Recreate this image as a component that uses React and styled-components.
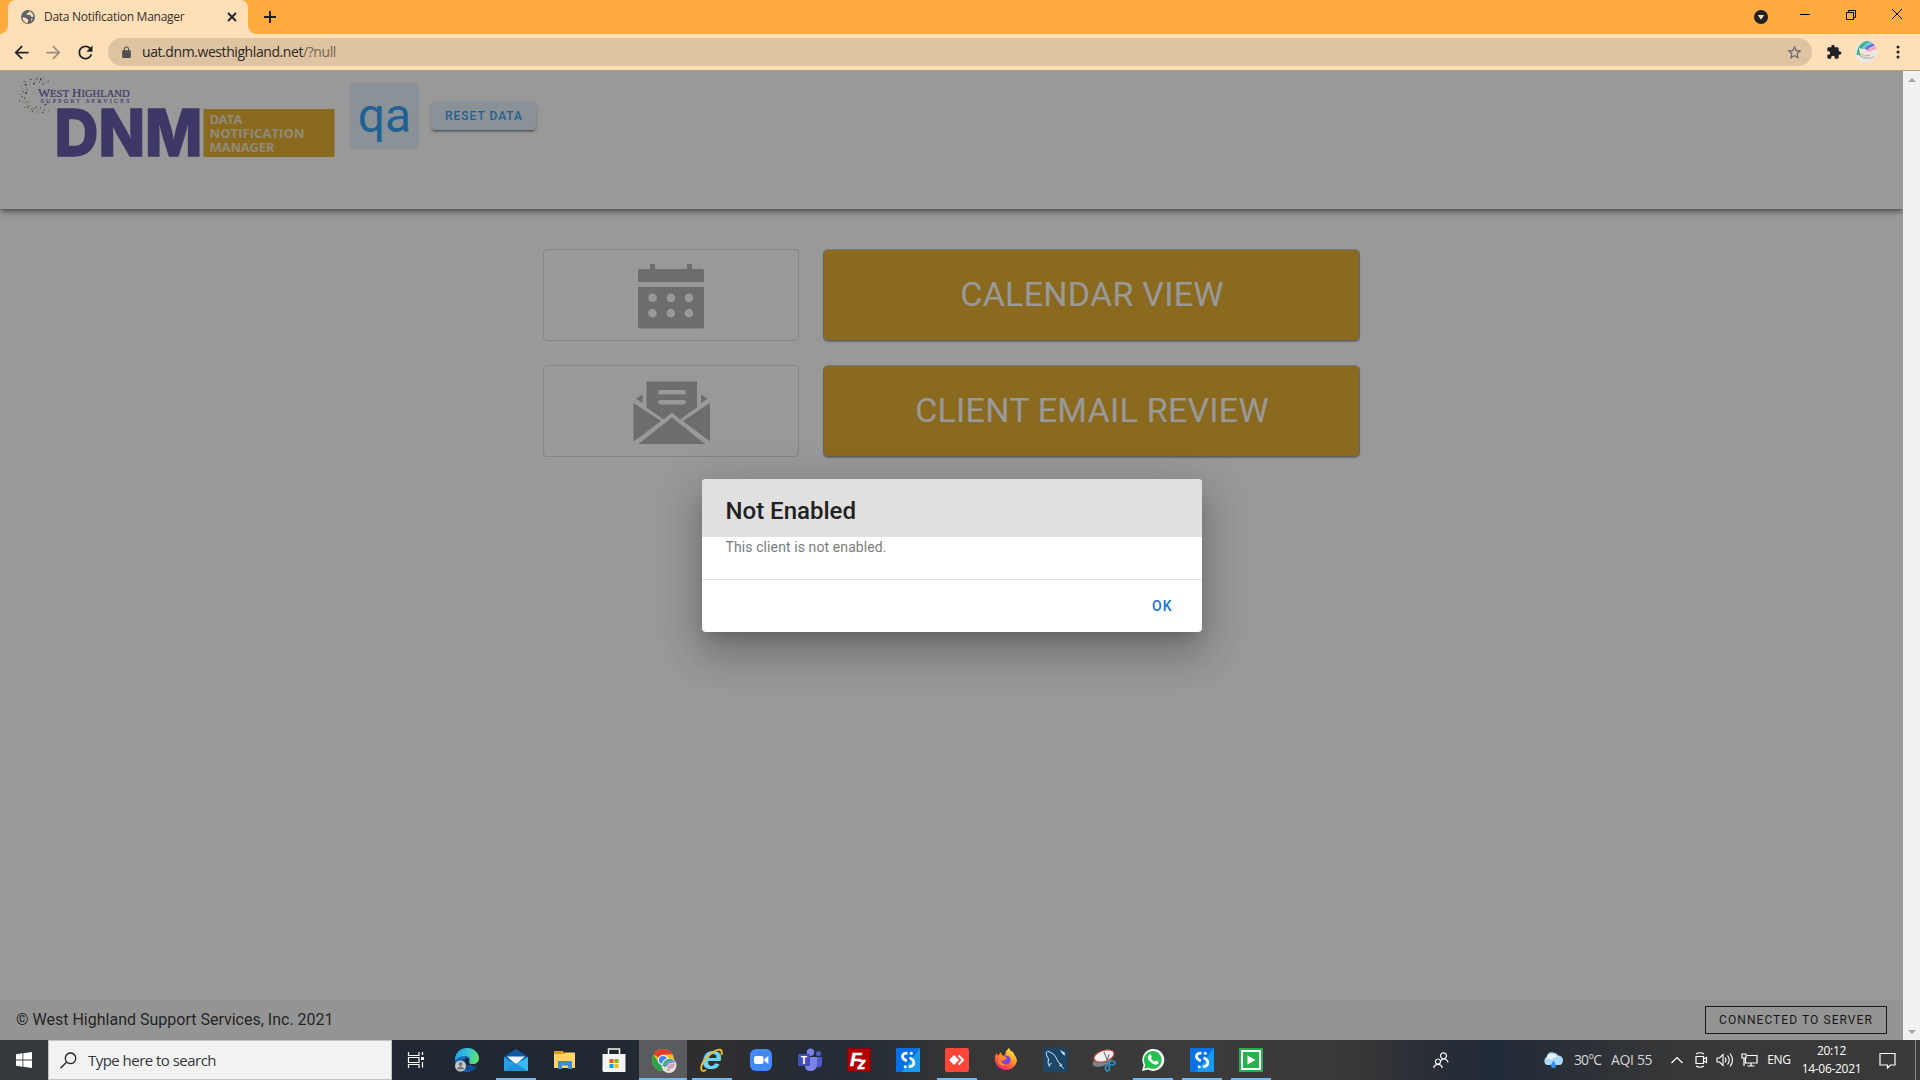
import React from "react";
import styled, { createGlobalStyle, css } from "styled-components";

const Global = createGlobalStyle`
  *, *::before, *::after { box-sizing: border-box; }
  html, body { margin: 0; padding: 0; overflow: hidden; }
  body { font-family: Roboto, "Liberation Sans", sans-serif; }
  svg { display: block; flex: none; overflow: visible; }
`;

const Screen = styled.div`
  width: 1920px;
  height: 1080px;
  display: flex;
  flex-direction: column;
  overflow: hidden;
`;

/* ---------- browser chrome ---------- */

const TabStrip = styled.div`
  height: 34px;
  flex: none;
  background: #ffab40;
  display: flex;
  align-items: stretch;
  padding-left: 8px;
`;

const Tab = styled.div`
  position: relative;
  width: 240px;
  background: #ffdfb8;
  border-radius: 8px 8px 0 0;
  display: flex;
  align-items: center;
  padding: 0 9px 0 12px;
  &::before,
  &::after {
    content: "";
    position: absolute;
    bottom: 0;
    width: 8px;
    height: 8px;
  }
  &::before {
    left: -8px;
    background: radial-gradient(circle at 0 0, #ffab40 7.5px, #ffdfb8 8px);
  }
  &::after {
    right: -8px;
    background: radial-gradient(circle at 100% 0, #ffab40 7.5px, #ffdfb8 8px);
  }
`;

const TabTitle = styled.span`
  flex: 1;
  margin-left: 8px;
  font: 12px/16px "Open Sans", "Noto Sans", sans-serif;
  letter-spacing: -0.27px;
  color: #33302c;
  white-space: nowrap;
`;

const IconCell = styled.div`
  width: ${(p) => p.$w || 32}px;
  flex: none;
  display: flex;
  align-items: center;
  justify-content: center;
`;

const Spacer = styled.div`
  flex: 1;
`;

const Toolbar = styled.div`
  height: 37px;
  flex: none;
  background: #ffdfb8;
  border-bottom: 1px solid #b59e82;
  display: flex;
  align-items: center;
  padding: 0 6px;
`;

const Omnibox = styled.div`
  flex: 1;
  height: 28px;
  margin: 0 6px;
  border-radius: 14px;
  background: #dfc4a1;
  display: flex;
  align-items: center;
  padding: 0 8px 0 10px;
`;

const Url = styled.span`
  flex: 1;
  margin-left: 8px;
  font: 14px/20px "Open Sans", "Noto Sans", sans-serif;
  letter-spacing: -0.42px;
  color: #2a2724;
  white-space: nowrap;
  span {
    color: #766655;
  }
`;

/* ---------- page ---------- */

const Viewport = styled.div`
  height: 969px;
  flex: none;
  display: flex;
`;

const Page = styled.div`
  position: relative;
  flex: 1;
  background: #fff;
  display: flex;
  flex-direction: column;
  overflow: hidden;
`;

const ScrollBar = styled.div`
  width: 17px;
  background: #f1f1f1;
  display: flex;
  flex-direction: column;
  justify-content: space-between;
  align-items: center;
  padding: 7px 0 6px;
`;

const ScrollArrow = styled.i`
  width: 0;
  height: 0;
  border: 4px solid transparent;
  ${(p) =>
    p.$down
      ? css`
          border-top-color: #a3a3a3;
          border-bottom: 0;
        `
      : css`
          border-bottom-color: #a3a3a3;
          border-top: 0;
        `}
`;

const Header = styled.header`
  height: 138px;
  flex: none;
  display: flex;
  align-items: flex-start;
  padding: 2px 16px 0;
  background: #fff;
  box-shadow: 0 2px 4px -1px rgba(0, 0, 0, 0.4), 0 4px 5px rgba(0, 0, 0, 0.2),
    0 1px 10px rgba(0, 0, 0, 0.16);
`;

const EnvBadge = styled.div`
  margin: 10px 0 0 14px;
  width: 69px;
  height: 66px;
  background: #e3f2fd;
  color: #2196f3;
  font-size: 48px;
  line-height: 66px;
  text-align: center;
`;

const ResetButton = styled.button`
  margin: 29px 0 0 12px;
  width: 105px;
  height: 28px;
  padding: 0 0 0 1px;
  border: 0;
  border-radius: 4px;
  background: #e3f2fd;
  color: #2196f3;
  font: 500 12px/28px Roboto, sans-serif;
  letter-spacing: 1px;
  box-shadow: 0 3px 1px -2px rgba(0, 0, 0, 0.3), 0 2px 2px rgba(0, 0, 0, 0.22),
    0 1px 5px rgba(0, 0, 0, 0.14);
`;

const Main = styled.main`
  flex: 1;
  display: grid;
  grid-template-columns: 256px 537px;
  grid-auto-rows: 92px;
  gap: 24px;
  justify-content: center;
  align-content: start;
  padding-top: 40px;
`;

const IconCard = styled.div`
  border: 1px solid rgba(0, 0, 0, 0.14);
  border-radius: 4px;
  display: flex;
  align-items: center;
  justify-content: center;
  padding: 3px 0 0;
`;

const MenuButton = styled.button`
  padding: 0 0 2px 1px;
  border: 1px solid rgba(110, 110, 110, 0.32);
  border-radius: 5px;
  background: #e3a81f;
  background-clip: padding-box;
  color: #fff;
  font: 400 34px/86px Roboto, sans-serif;
  letter-spacing: 0.25px;
  box-shadow: 0 1px 1px rgba(0, 0, 0, 0.2), 0 1px 2px rgba(0, 0, 0, 0.16);
`;

const Footer = styled.footer`
  height: 40px;
  flex: none;
  background: #f5f5f5;
  display: flex;
  align-items: center;
  justify-content: space-between;
  padding: 0 16px;
  font-size: 16px;
  line-height: 24px;
  color: rgba(0, 0, 0, 0.87);
`;

const StatusChip = styled.div`
  width: 182px;
  height: 28px;
  border: 1px solid #141414;
  color: #111;
  font-size: 12px;
  line-height: 26px;
  letter-spacing: 1.07px;
  text-align: center;
`;

const Overlay = styled.div`
  position: absolute;
  inset: 0;
  background: rgba(33, 33, 33, 0.46);
  display: flex;
  align-items: center;
  justify-content: center;
  padding-left: 1px;
`;

const Dialog = styled.div`
  width: 500px;
  height: 153px;
  border-radius: 4px;
  overflow: hidden;
  background: #fff;
  box-shadow: 0 11px 15px -7px rgba(0, 0, 0, 0.2),
    0 24px 38px 3px rgba(0, 0, 0, 0.14), 0 9px 46px 8px rgba(0, 0, 0, 0.12);
`;

const DialogTitle = styled.div`
  height: 58px;
  padding: 16px 0 0 23.5px;
  background: #e0e0e0;
  color: #212121;
  font-size: 24px;
  font-weight: 500;
  line-height: 32px;
`;

const DialogText = styled.div`
  height: 42px;
  padding-left: 23.5px;
  color: #7c7c7c;
  font-size: 14px;
  line-height: 21px;
  letter-spacing: 0.1px;
`;

const DialogActions = styled.div`
  height: 53px;
  border-top: 1px solid #e0e0e0;
  display: flex;
  justify-content: flex-end;
  align-items: center;
  padding-right: 29.5px;
  color: #1976d2;
  font-size: 14px;
  font-weight: 500;
  letter-spacing: 1px;
`;

/* ---------- taskbar ---------- */

const TaskBar = styled.div`
  height: 40px;
  flex: none;
  display: flex;
  align-items: stretch;
  background: linear-gradient(
    90deg,
    #35393b 0,
    #33383b 60px,
    #1f2733 392px,
    #202832 620px,
    #302f2f 710px,
    #242c35 800px,
    #252d36 860px,
    #363636 960px,
    #3b3b3b 1180px,
    #383838 1350px,
    #2b2f36 1420px,
    #202a38 1490px,
    #2b3037 1570px,
    #383838 1690px,
    #3a3a3a 1920px
  );
`;

const SearchBox = styled.div`
  width: 344px;
  height: 40px;
  background: #f2f2f2;
  border: 1px solid #c2c2c2;
  display: flex;
  align-items: center;
  padding-left: 11px;
  font: 15px/20px "Open Sans", "Noto Sans", sans-serif;
  letter-spacing: -0.53px;
  color: #33373b;
  span {
    margin-left: 11px;
  }
`;

const AppCell = styled.div`
  width: 48px;
  margin-right: ${(p) => (p.$first ? 3 : 1)}px;
  flex: none;
  display: flex;
  align-items: center;
  justify-content: center;
  background: ${(p) =>
    p.$state === "active"
      ? "linear-gradient(#76b9ed, #76b9ed) bottom / 48px 2px no-repeat, #5a5b5e"
      : p.$state === "open"
      ? "linear-gradient(#76b9ed, #76b9ed) bottom / 40px 2px no-repeat"
      : "none"};
`;

const TrayText = styled.div`
  width: ${(p) => p.$w}px;
  flex: none;
  align-self: center;
  text-align: center;
  white-space: nowrap;
  color: #fff;
  font: 12px/${(p) => p.$line || 16}px "Open Sans", "Noto Sans", sans-serif;
  letter-spacing: -0.3px;
`;

const Clock = styled(TrayText)`
  margin-left: 4px;
  padding-right: 1px;
`;

const Weather = styled.div`
  width: 123px;
  flex: none;
  margin-left: 77px;
  display: flex;
  align-items: center;
  white-space: nowrap;
  color: #d6d6d6;
  font: 14px/20px "Open Sans", "Noto Sans", sans-serif;
  letter-spacing: -0.9px;
`;

const Temperature = styled.span`
  width: 37px;
  margin-left: 10px;
`;

const AirQuality = styled.span`
  letter-spacing: -0.35px;
`;

const ShowDesktop = styled.div`
  width: 5px;
  margin-left: 4px;
  border-left: 1px solid #858585;
`;

/* ---------- small drawings ---------- */

const Glyph = ({ d, size = 20, fill = "#202124" }) => (
  <svg width={size} height={size} viewBox="0 0 24 24" fill={fill}>
    <path d={d} />
  </svg>
);

const Globe = () => (
  <svg width="16" height="16" viewBox="0 0 16 16">
    <circle cx="8" cy="8" r="7" fill="#5f6368" />
    <path
      d="M2.600 8.200 6 9l2.300 1.800-.8 3.400C4.600 13.800 2.500 11.400 2.600 8.200zM9 2.300l-.4 1.600-2 .4.200 1.500 3.400.3 1 1.700 2.400.2c-.1-2.700-1.900-5-4.600-5.700zM11.200 9.600l1.700.2-1.900 2.600z"
      fill="#ffdfb8"
    />
  </svg>
);

const dotRing = [];
for (let i = 0; i < 54; i++) {
  const a = ((52 + ((i * 19) % 258)) * Math.PI) / 180;
  const r = 12 + ((i * 7) % 8);
  dotRing.push({
    x: 38 + r * Math.cos(a),
    y: 95 + r * Math.sin(a),
    s: i % 4 === 0 ? 0.9 : 0.6,
    c: i % 3 === 0 ? "#4b4370" : "#b1a574",
  });
}

const Logo = () => (
  <svg width="320" height="90" viewBox="16 73 320 90">
    {dotRing.map((d, i) => (
      <circle key={i} cx={d.x} cy={d.y} r={d.s} fill={d.c} />
    ))}
    <g fill="#574ca1" stroke="#574ca1" fontFamily="'Liberation Serif', serif">
      <text x="38" y="97" fontSize="13" strokeWidth=".2">
        <tspan>W</tspan>
        <tspan fontSize="9.8" textLength="19" lengthAdjust="spacingAndGlyphs" x="50">EST</tspan>
        <tspan x="72">H</tspan>
        <tspan fontSize="9.8" textLength="48" lengthAdjust="spacingAndGlyphs" x="81.5">IGHLAND</tspan>
      </text>
      <text x="40.5" y="103" fontSize="6" textLength="89" strokeWidth=".15">
        SUPPORT SERVICES
      </text>
    </g>
    <text
      x="54.5"
      y="156.3"
      fontFamily="Inter, 'Open Sans', sans-serif"
      fontWeight="800"
      fontSize="64.5"
      textLength="148"
      lengthAdjust="spacingAndGlyphs"
      fill="#574ca1"
      stroke="#574ca1"
      strokeWidth="1.3"
    >
      DNM
    </text>
    <rect x="203.5" y="109" width="131" height="48" fill="#e3a81f" />
    <g fill="#efe3c4" fontFamily="'Open Sans', sans-serif" fontWeight="700" fontSize="13">
      <text x="209.5" y="124" textLength="33">DATA</text>
      <text x="209.5" y="138" textLength="95">NOTIFICATION</text>
      <text x="209.5" y="152.3" textLength="65">MANAGER</text>
    </g>
  </svg>
);

const CalendarIcon = () => (
  <svg width="68" height="66" viewBox="0 0 68 66" fill="#aeaeae">
    <path d="M3 5h10V0h5v5h32V0h5v5h10q2 0 2 2v11H1V7q0-2 2-2z" />
    <path
      fillRule="evenodd"
      d="M1 23h66v39.500q0 2-2 2H3q-2 0-2-2zM15.500 29.500a4.300 4.300 0 1 0 .01 0zM33.800 29.500a4.300 4.300 0 1 0 .01 0zM52 29.500a4.300 4.300 0 1 0 .01 0zM15.500 44.800a4.300 4.300 0 1 0 .01 0zM33.800 44.800a4.300 4.300 0 1 0 .01 0zM52 44.800a4.300 4.300 0 1 0 .01 0z"
    />
  </svg>
);

const MailIcon = () => (
  <svg width="77" height="64" viewBox="0 0 77 64" fill="#aeaeae">
    <path d="M13.500 0.500h50.500v26L47 38.500l-8-7-8.500 7-17-12z" />
    <path d="M27 9h24q2 0 2 2.200T51 13.400H27q-2 0-2-2.200T27 9zM27 19h24q2 0 2 2.200T51 23.400H27q-2 0-2-2.200T27 19z" fill="#fff" />
    <path d="M9.500 13.500V22L3 17.800zM68 13.500V22l6.500-4.200zM.5 22 28 40 .5 60.500zM77 22 50 40l27 20.500zM5.500 63 39 36.500 72 63z" />
  </svg>
);

const WinLogo = () => (
  <svg width="16" height="16" viewBox="0 0 16 16" fill="#fff">
    <path d="M0 2.200 6.500 1.300V7.600H0zM7.300 1.200 16 0v7.600H7.300zM0 8.400h6.500v6.300L0 13.800zM7.300 8.400H16V16l-8.700-1.200z" />
  </svg>
);

const icons = {
  taskview: (
    <svg width="24" height="24" viewBox="0 0 24 24" fill="none" stroke="#fff" strokeWidth="1.2">
      <path d="M4.500 4v3.500h10.500V4M4.500 20v-3.500h10.500V20M4.500 9.500h10.500v5H4.500zM18.500 4v3M18.500 14v5.500" />
      <path d="M17 9h3v3h-3z" fill="#fff" stroke="none" />
    </svg>
  ),
  edge: (
    <svg width="24" height="24" viewBox="0 0 24 24">
      <defs>
        <linearGradient id="eg1" x1="0" x2="1" y1=".3" y2=".5">
          <stop offset="0" stopColor="#229fe3" />
          <stop offset=".5" stopColor="#35c1d8" />
          <stop offset="1" stopColor="#66e36b" />
        </linearGradient>
      </defs>
      <circle cx="12" cy="12" r="11.9" fill="#1368b8" />
      <path d="M24 11v7.500l-4 .5-6-2z" fill="#212a34" />
      <path d="M0 12C0 4 6 0 12 0c7 0 12 5 12 10 0 4-3 6-6 6-3.500 0-4.500-1.500-3.500-3 1-2 0-5-4-5C5 8 0 11 0 14z" fill="url(#eg1)" />
      <path d="M8 11c-3 6 1 11 7 12 4-1 6-3 7-5-5 2-11 1-11-5z" fill="#0c4a91" />
      <path d="M10.500 9.500c3 .5 4.500 2 3.500 4.500-.6 1.500.5 2.500 3 2.500l-4 1c-3-2-4-4-2.500-8z" fill="#1f2733" />
      <circle cx="5.500" cy="18" r="5.500" fill="#c8c8c8" />
      <circle cx="5.500" cy="16" r="2" fill="#777" />
      <path d="M2 21.500c0-4 7-4 7 0z" fill="#777" />
    </svg>
  ),
  mail: (
    <svg width="24" height="24" viewBox="0 0 24 24">
      <path d="M0 9 12 1l12 8v6H0z" fill="#0a5ca8" />
      <path d="M3 8.500h18l-9 8z" fill="#f3f5f7" />
      <path d="M0 9l12 7.500L0 23z" fill="#2aa0e4" />
      <path d="M24 9v14H0z" fill="#35bdf3" />
      <path d="M0 23 11 15l13 8z" fill="#1c94dc" />
    </svg>
  ),
  folder: (
    <svg width="24" height="24" viewBox="0 0 24 24">
      <path d="M1 3h9l1.500 2H22v6H1z" fill="#dc9a19" />
      <path d="M1 6h10l1-1.500h10V20H1z" fill="#ffd566" />
      <path d="M5 21v-8h14v8h-4v-3.500H9V21z" fill="#3a8ed2" />
    </svg>
  ),
  store: (
    <svg width="24" height="24" viewBox="0 0 24 24">
      <path d="M6.500 7V1h11v6" fill="none" stroke="#f4f4f4" strokeWidth="1.5" />
      <path d="M.5 6h23v18H2q-1.500 0-1.500-1.500z" fill="#f4f4f4" />
      <path d="M7.500 11h4v4h-4z" fill="#f25022" />
      <path d="M12.500 11h4v4h-4z" fill="#7fba00" />
      <path d="M7.500 16h4v4h-4z" fill="#00a4ef" />
      <path d="M12.500 16h4v4h-4z" fill="#ffb900" />
    </svg>
  ),
  chrome: (
    <svg width="24" height="24" viewBox="-.5 0 24 24">
      <circle cx="11.500" cy="12" r="11" fill="#fbc116" />
      <path d="M11.500 12 2 6.500a11 11 0 0 1 19 0H11.500z" fill="#e33b2e" />
      <path d="M11.500 23A11 11 0 0 1 2 6.500l5 8 7 2z" fill="#2ba24c" />
      <circle cx="11.500" cy="12" r="5.2" fill="#fff" />
      <circle cx="11.500" cy="12" r="4.1" fill="#4285f4" />
      <circle cx="17.500" cy="17.500" r="7.5" fill="#e6e5e4" />
      <path d="M11 17.500q1-6 8-7l4 2q-8 0-9 7z" fill="#3bab83" />
      <path d="M13.500 16.500q3-4 9-4l1 2-6 1-2 3z" fill="#7d8fe0" />
      <path d="M15.500 19.500q1-4 8-4l-1 4-5 2z" fill="#d4a3a9" />
      <path d="m13.500 21.500 6-1-2 3z" fill="#b8b5a5" />
    </svg>
  ),
  ie: (
    <svg width="24" height="24" viewBox="0 0 24 24">
      <text x="2" y="20.5" fontFamily="'Liberation Sans', sans-serif" fontWeight="700" fontStyle="italic" fontSize="33" textLength="20" lengthAdjust="spacingAndGlyphs" fill="#69d5f8">
        e
      </text>
      <path d="M21.500 7C23 1 19 0 13 4 5 9-1 19 2 22.500q1.500 1 4-.5" fill="none" stroke="#f5bf25" strokeWidth="1.9" />
    </svg>
  ),
  zoom: (
    <svg width="24" height="24" viewBox="0 0 24 24">
      <rect x="1" y="1" width="22" height="22" rx="6" fill="#4289fb" />
      <rect x="5" y="8" width="9.5" height="8" rx="2" fill="#fff" />
      <path d="m15.500 11 3.800-3v8l-3.800-3z" fill="#fff" />
    </svg>
  ),
  teams: (
    <svg width="24" height="24" viewBox="0 0 24 24">
      <circle cx="12.500" cy="4.300" r="3.7" fill="#7b83eb" />
      <circle cx="20.500" cy="5.500" r="2.6" fill="#5059c9" />
      <path d="M16 9h8v7q0 3-3.500 3.500H16z" fill="#5059c9" />
      <path d="M7 9h12v8q-1 6-6.500 6T7 18z" fill="#7b83eb" />
      <rect y="6" width="12" height="12" rx="1" fill="#464eb8" />
      <text x="2.7" y="16" fontFamily="'Open Sans', sans-serif" fontWeight="700" fontSize="11" fill="#fff">T</text>
    </svg>
  ),
  filezilla: (
    <svg width="24" height="24" viewBox="0 0 24 24">
      <rect x=".5" y=".5" width="23" height="23" fill="#b30000" stroke="#860000" strokeDasharray="2 1" />
      <g fontFamily="'Liberation Sans', sans-serif" fontWeight="700" fontStyle="italic" fill="#fff" stroke="#fff" strokeWidth=".5">
        <text x="3" y="18" fontSize="19">F</text>
        <text x="10.5" y="20.5" fontSize="16">z</text>
      </g>
    </svg>
  ),
  sync: (
    <svg width="24" height="24" viewBox="0 0 24 24">
      <path d="M0 0h24v24H0z" fill="#0871e8" />
      <path d="M24 0v24H6z" fill="#159af0" />
      <path d="M11.500 5.200Q6.500 5 6.500 8.500q0 2.500 4.500 4.500M13.500 9.800q4.300 1.700 4.300 4.700 0 4-5 4.200" fill="none" stroke="#fff" strokeWidth="2.8" />
      <circle cx="15.300" cy="5.200" r="1.5" fill="#fff" />
      <circle cx="9.200" cy="18.700" r="1.5" fill="#fff" />
    </svg>
  ),
  anydesk: (
    <svg width="24" height="24" viewBox="0 0 24 24">
      <rect width="24" height="24" rx="2" fill="#ff4438" />
      <path d="m9 7 5 5-5 5-5-5z" fill="#fff" />
      <path d="m13.500 7.500 4.500 4.500-4.500 4.500" fill="none" stroke="#fff" strokeWidth="2" />
    </svg>
  ),
  firefox: (
    <svg width="24" height="24" viewBox="0 0 24 24">
      <defs>
        <linearGradient id="ff1" x1=".8" x2=".2" y1="0" y2="1">
          <stop offset="0" stopColor="#fff44f" />
          <stop offset=".4" stopColor="#ff9d22" />
          <stop offset=".75" stopColor="#ff4747" />
          <stop offset="1" stopColor="#e5159b" />
        </linearGradient>
      </defs>
      <path d="M3 5q0 2 1 2.500L7 4q0 3 3 4 2-2 2-5l3-3q1 3 4 4l1 2q3 4 3 7A11.200 11.200 0 0 1 1 13Q0 8 3 5z" fill="url(#ff1)" />
      <circle cx="12" cy="12" r="4.6" fill="#7a45d8" />
      <path d="M5 9q4-3 8 1l-2 2q-3 1-4 0 0 4 5 4.500-5 3-8-2z" fill="#ff8a2a" />
    </svg>
  ),
  mysql: (
    <svg width="24" height="24" viewBox="0 0 24 24">
      <rect width="24" height="24" rx="2" fill="#1b4668" />
      <path d="M6.500 18.500Q4 15 5.500 11 3 7 3.200 4.500 4 2.500 7 4q5.500 2.500 7 7.500 1 3.500 5 5.500l-2.500.3q3 1 4 3.200M6.500 18.500q.2-4 2-3" fill="none" stroke="#d7e6ee" strokeWidth="1" />
      <path d="m17 2 1.500 2.500 1.500 2 2.200 1-.7-3z" fill="#d7e6ee" />
    </svg>
  ),
  snip: (
    <svg width="24" height="24" viewBox="0 0 24 24">
      <ellipse cx="10" cy="13" rx="10" ry="5" fill="#7b8389" transform="rotate(-20 10 13)" />
      <ellipse cx="12" cy="8" rx="10.500" ry="5.500" fill="#f2f2f2" stroke="#d43a31" strokeWidth="1.2" transform="rotate(-18 12 8)" />
      <path d="m12 4 4 10M17 6l-2 8-8 1" fill="none" stroke="#777" strokeWidth="1.1" />
      <ellipse cx="20" cy="15" rx="3" ry="2" fill="none" stroke="#2b91c9" strokeWidth="1.6" />
      <ellipse cx="15.500" cy="20" rx="2" ry="3" fill="none" stroke="#2b91c9" strokeWidth="1.6" />
    </svg>
  ),
  whatsapp: (
    <svg width="24" height="24" viewBox="0 0 24 24">
      <path d="M1 23l1.600-6A11 11 0 1 1 7 21.500z" fill="#fff" />
      <path d="M3.300 20.800l1-4A8.900 8.900 0 1 1 7.400 19.700z" fill="#25c150" />
      <path
        d="M8.500 6.500q1-.6 1.500.4l.8 1.800q0 .8-.9 1.600 1.300 2.400 3.900 3.500l1.200-1.300q2.500 1 2.600 1.500-.2 2.600-3 2.700C10.500 16.200 7 12 6.900 9.300q0-1.900 1.600-2.800z"
        fill="#fff"
      />
    </svg>
  ),
  player: (
    <svg width="24" height="24" viewBox="0 0 24 24">
      <rect width="24" height="24" fill="#25b24c" />
      <rect x="3" y="3" width="18" height="18" fill="none" stroke="#fff" strokeWidth="2" />
      <path d="m8.500 7.500 8 4.500-8 4.500z" fill="#fff" />
    </svg>
  ),
};

const apps = [
  ["taskview"],
  ["edge"],
  ["mail", "open"],
  ["folder"],
  ["store"],
  ["chrome", "active"],
  ["ie", "open"],
  ["zoom"],
  ["teams"],
  ["filezilla"],
  ["sync"],
  ["anydesk", "open"],
  ["firefox"],
  ["mysql"],
  ["snip"],
  ["whatsapp", "open"],
  ["sync", "open"],
  ["player", "open"],
];

const Line = ({ d, w = 16, h = 16, sw = 1, stroke = "#fff" }) => (
  <svg width={w} height={h} viewBox={`0 0 ${w} ${h}`} fill="none" stroke={stroke} strokeWidth={sw}>
    <path d={d} />
  </svg>
);

const Avatar = () => (
  <svg width="22" height="22" viewBox="0 0 22 22">
    <circle cx="11" cy="11" r="11" fill="#e9e7e6" />
    <path d="M1.500 14Q2 3 11 0q4 0 6 2Q9 4 6 14z" fill="#3fb389" />
    <path d="M6 9Q9 2 15 .8l3 1.700Q11 4 9 11z" fill="#6bc8e8" />
    <path d="M8 10q3-6 10-7.500l2 2.500Q13 6 11 12z" fill="#6d78dd" />
    <path d="M12 10q3-4 8.500-4.500l1 3Q17 8 15 11z" fill="#eca5bb" />
    <path d="m4 7 4 1q3-1 4 2l5 1 1 4-5-1-4 1-4-2z" fill="#f1e6d6" />
    <path d="m4 14 5 3h8l2-2M6 13l4 2 5-1" fill="none" stroke="#a9a69b" strokeWidth=".9" />
  </svg>
);

const P = {
  back: "M20 11H7.830l5.590-5.590L12 4l-8 8 8 8 1.410-1.410L7.830 13H20v-2z",
  forward: "M4 11h12.170l-5.590-5.590L12 4l8 8-8 8-1.410-1.410L16.170 13H4v-2z",
  reload:
    "M17.650 6.350C16.200 4.900 14.210 4 12 4c-4.420 0-7.990 3.580-7.990 8s3.570 8 7.990 8c3.730 0 6.840-2.550 7.730-6h-2.080c-.82 2.330-3.040 4-5.650 4-3.310 0-6-2.690-6-6s2.690-6 6-6c1.660 0 3.140.69 4.220 1.780L13 11h7V4l-2.350 2.350z",
  lock: "M18 8h-1V6c0-2.760-2.240-5-5-5S7 3.240 7 6v2H6c-1.100 0-2 .9-2 2v10c0 1.100.9 2 2 2h12c1.100 0 2-.9 2-2V10c0-1.100-.9-2-2-2zM8.900 8V6c0-1.710 1.390-3.100 3.100-3.100s3.100 1.390 3.100 3.100v2z",
  star: "M22 9.240l-7.190-.62L12 2 9.190 8.630 2 9.240l5.460 4.730L5.820 21 12 17.270 18.180 21l-1.630-7.030L22 9.240zM12 15.400l-3.760 2.270 1-4.280-3.320-2.880 4.380-.38L12 6.100l1.710 4.040 4.380.38-3.320 2.880 1 4.280L12 15.400z",
  puzzle:
    "M20.500 11H19V7c0-1.100-.9-2-2-2h-4V3.500C13 2.120 11.880 1 10.500 1S8 2.120 8 3.500V5H4c-1.100 0-1.990.9-1.990 2v3.800H3.500c1.490 0 2.700 1.210 2.700 2.700s-1.210 2.700-2.700 2.700H2V20c0 1.100.9 2 2 2h3.800v-1.500c0-1.490 1.210-2.700 2.700-2.700 1.490 0 2.700 1.210 2.700 2.700V22H17c1.100 0 2-.9 2-2v-4h1.500c1.380 0 2.500-1.120 2.500-2.500S21.880 11 20.500 11z",
};

export default function App() {
  return (
    <Screen>
      <Global />
      <TabStrip>
        <Tab>
          <Globe />
          <TabTitle>Data Notification Manager</TabTitle>
          <Line w={14} h={14} sw={1.8} stroke="#202124" d="M3 3l8 8M11 3l-8 8" />
        </Tab>
        <IconCell $w={44}>
          <Line w={12} h={12} sw={2} stroke="#202124" d="M6 0v12M0 6h12" />
        </IconCell>
        <Spacer />
        <IconCell $w={42}>
          <svg width="14" height="14" viewBox="0 0 14 14">
            <circle cx="7" cy="7" r="7" fill="#202124" />
            <path d="M3.800 5h6.400L7 9.800z" fill="#ffdfb8" />
          </svg>
        </IconCell>
        <IconCell $w={46}>
          <Line w={10} h={12} stroke="#000" d="M0 3.500h10" />
        </IconCell>
        <IconCell $w={46}>
          <Line w={10} h={16} stroke="#000" d="M.5 3.500h7v7h-7zM2.500 3V1.500h7v7H8" />
        </IconCell>
        <IconCell $w={46}>
          <Line w={10} h={16} stroke="#000" d="M0 0l10 10M10 0L0 10" />
        </IconCell>
      </TabStrip>
      <Toolbar>
        <IconCell $w={31}><Glyph size={21} d={P.back} /></IconCell>
        <IconCell><Glyph size={21} d={P.forward} fill="#a08e7a" /></IconCell>
        <IconCell $w={33}><Glyph size={21} d={P.reload} /></IconCell>
        <Omnibox>
          <IconCell $w={16}><Glyph size={13} d={P.lock} fill="#4f4f50" /></IconCell>
          <Url>uat.dnm.westhighland.net<span>/?null</span></Url>
          <IconCell $w={20}><Glyph size={17} d={P.star} fill="#5f6368" /></IconCell>
        </Omnibox>
        <IconCell><Glyph size={16} d={P.puzzle} /></IconCell>
        <IconCell><Avatar /></IconCell>
        <IconCell>
          <svg width="4" height="14" viewBox="0 0 4 14" fill="#202124">
            <circle cx="2" cy="2" r="1.5" />
            <circle cx="2" cy="7" r="1.5" />
            <circle cx="2" cy="12" r="1.5" />
          </svg>
        </IconCell>
      </Toolbar>

      <Viewport>
        <Page>
          <Header>
            <Logo />
            <EnvBadge>qa</EnvBadge>
            <ResetButton>RESET DATA</ResetButton>
          </Header>
          <Main>
            <IconCard><CalendarIcon /></IconCard>
            <MenuButton>CALENDAR VIEW</MenuButton>
            <IconCard><MailIcon /></IconCard>
            <MenuButton>CLIENT EMAIL REVIEW</MenuButton>
          </Main>
          <Footer>
            <span>© West Highland Support Services, Inc. 2021</span>
            <StatusChip>CONNECTED TO SERVER</StatusChip>
          </Footer>
          <Overlay>
            <Dialog>
              <DialogTitle>Not Enabled</DialogTitle>
              <DialogText>This client is not enabled.</DialogText>
              <DialogActions>OK</DialogActions>
            </Dialog>
          </Overlay>
        </Page>
        <ScrollBar>
          <ScrollArrow />
          <ScrollArrow $down />
        </ScrollBar>
      </Viewport>

      <TaskBar>
        <IconCell $w={48}><WinLogo /></IconCell>
        <SearchBox>
          <Line w={17} h={17} sw={1.3} stroke="#222" d="M6.200 10.500 .5 16.200M10.500 1a5.300 5.300 0 1 0 .01 0z" />
          <span>Type here to search</span>
        </SearchBox>
        {apps.map(([name, state], i) => (
          <AppCell key={i} $state={state} $first={i === 0}>
            {icons[name]}
          </AppCell>
        ))}
        <Spacer />
        <IconCell $w={48}>
          <Line w={16} h={16} sw={1.2} d="M10.500 .8a3 3 0 1 1-.01 0zM8 8.500q2.500-2.500 5-1 1.800 1 2 3M5 7a2.600 2.600 0 1 1-.01 0zM.8 15.800q.5-3.500 4.200-3.500t4.200 3.500" />
        </IconCell>
        <Weather>
          <svg width="22" height="18" viewBox="0 0 22 18">
            <path d="M5 14a4.500 4.500 0 0 1-.5-8Q6 .5 11 1.500q4 .5 5 3 4.500 0 5 4.500 0 5-4 5z" fill="#a9daf8" />
            <path d="M4 8q2-6 7-5 3 .5 4 3-4 0-5 3-3-2-6-1z" fill="#e6f4fc" />
            <path d="M11.500 9.500q-3 4-2.500 5.500 0 2 2.500 2T14 15q0-1.500-2.500-5.500z" fill="#3490ec" />
          </svg>
          <Temperature>30°C</Temperature>
          <AirQuality>AQI 55</AirQuality>
        </Weather>
        <IconCell $w={24}><Line w={14} h={8} sw={1.2} d="M1.500 7 7 1.500 12.500 7" /></IconCell>
        <IconCell $w={24}>
          <Line w={14} h={16} sw={1.2} d="M2 4.500h7.500v7H2zM9.500 7l3-1.500v5l-3-1.500M2 2q4-2.500 8 0M2 14q4 2.500 8 0" />
        </IconCell>
        <IconCell $w={24}>
          <Line w={18} h={16} sw={1.1} d="M1 6h2.500L7 2.500v11L3.500 10H1zM9 5.500q2 2.500 0 5M11.500 3.500q3.500 4.500 0 9M14 1.500q5 6.500 0 13" />
        </IconCell>
        <IconCell $w={24}>
          <Line w={17} h={16} sw={1.2} d="M6 3.500h10v7.500H4.500V6M1 2h4v4H1zM10 11v3M6.500 14h7M3 6v8" />
        </IconCell>
        <TrayText $w={36}>ENG</TrayText>
        <Clock $w={62} $line={18}>
          20:12
          <br />
          14-06-2021
        </Clock>
        <IconCell $w={48}>
          <Line w={17} h={17} sw={1.2} d="M1 1.500h15v11.500h-4.500L8.500 16V13H1z" />
        </IconCell>
        <ShowDesktop />
      </TaskBar>
    </Screen>
  );
}
